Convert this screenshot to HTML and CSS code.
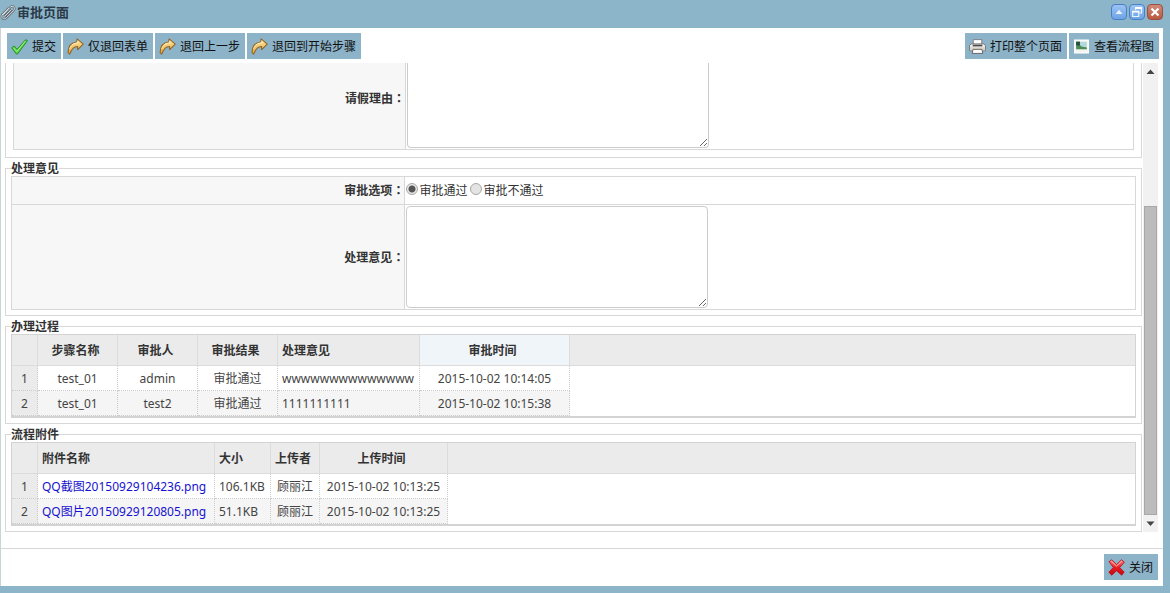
FILE: index.html
```html
<!DOCTYPE html>
<html lang="zh-CN">
<head>
<meta charset="utf-8">
<title>审批页面</title>
<link rel="stylesheet" href="styles.css">
</head>
<body>
<svg width="0" height="0" class="defs" aria-hidden="true">
  <defs>
    <linearGradient id="gold" x1="0" y1="0" x2="0" y2="1"><stop offset="0" stop-color="#ffeaa8"/><stop offset="1" stop-color="#e9a02c"/></linearGradient>
    <linearGradient id="red" x1="0" y1="0" x2="0" y2="1"><stop offset="0" stop-color="#ff8a8a"/><stop offset="0.5" stop-color="#e81c22"/><stop offset="1" stop-color="#c8060e"/></linearGradient>
    <symbol id="arrow" viewBox="0 0 16 16"><path d="M9.500.8 15.300 5.700 10 10.900V8C6.500 7.800 4.400 10.200 2.600 15.200L1 13.800C1.200 8 4 4 9.200 3.700Z" fill="url(#gold)" stroke="#8f6526" stroke-width="1" stroke-linejoin="round"/><path d="M10.300 2.700v2C6.500 4.800 3.700 6.600 2.500 10.500" fill="none" stroke="#fff3cf" stroke-width=".8"/></symbol>
  </defs>
</svg>
<div class="window">
  <header class="titlebar">
    <svg class="clip" viewBox="0 0 16 16" aria-hidden="true"><path d="M3.200 10.800 9.800 3.600c1.300-1.400 3-1.700 4-.7s.8 2.600-.4 3.900L6.600 13.700c-1.200 1.200-2.900 1.500-4 .5s-1-2.700.1-4L8.500 4.300M5 12.200l6.400-6.800" fill="none" stroke="#58636b" stroke-width="2.100"/><path d="M3.200 10.800 9.800 3.600c1.300-1.400 3-1.700 4-.7s.8 2.600-.4 3.900L6.600 13.700c-1.200 1.200-2.900 1.500-4 .5s-1-2.700.1-4L8.500 4.300M5 12.200l6.400-6.800" fill="none" stroke="#e4e7e9" stroke-width="1"/></svg>
    <h1 class="title">审批页面</h1>
    <div class="tools">
      <button class="tool" aria-label="收起"><svg viewBox="0 0 14 14"><path d="M7 4.800 10.500 9h-7z" fill="#e8f3ff"/></svg></button>
      <button class="tool" aria-label="还原"><svg viewBox="0 0 14 14"><path d="M5.500 5V3h6v5h-2M2.700 6.500h6v5h-6z" fill="none" stroke="#e8f3ff" stroke-width="1.200"/><path d="M5 3h7M2.200 6.600h7" stroke="#fff" stroke-width="1.800"/></svg></button>
      <button class="tool tool-close" aria-label="关闭窗口"><svg viewBox="0 0 14 14"><path d="m3.500 3.500 7 7m0-7-7 7" stroke="#fff" stroke-width="2.200"/></svg></button>
    </div>
  </header>
  <main class="panel">
    <div class="toolbar">
      <button class="btn"><svg viewBox="0 0 16 16"><path d="M.7 9.200 3 7.500l2.700 3.200L13.800 1.600l1.700.8L6.200 15H4.900Z" fill="#55cf43" stroke="#238f25" stroke-width=".9" stroke-linejoin="round"/><path d="m2.300 9.200 3.200 3.500L13.600 3" fill="none" stroke="#aff497" stroke-width=".9"/></svg><span>提交</span></button>
      <button class="btn"><svg><use href="#arrow"/></svg><span>仅退回表单</span></button>
      <button class="btn"><svg><use href="#arrow"/></svg><span>退回上一步</span></button>
      <button class="btn"><svg><use href="#arrow"/></svg><span>退回到开始步骤</span></button>
      <span class="spacer"></span>
      <button class="btn"><svg viewBox="0 0 16 16"><path d="M4 1.500h8V6H4z" fill="#fff" stroke="#777" stroke-width=".8"/><path d="M2 5.500h12l1.500 1.700V12H.5V7.200z" fill="#ececec" stroke="#6b6b6b" stroke-width=".8"/><path d="M3.500 6.300h9v1.600h-9z" fill="#4a4a4a"/><path d="M.9 8.800h14.200V11.600H.9z" fill="#d9d3c8"/><path d="M3.800 10.700h8.400l.8 3.800H3z" fill="#fff" stroke="#555" stroke-width=".8"/></svg><span>打印整个页面</span></button>
      <button class="btn"><svg viewBox="0 0 16 16"><path d="M1.500 2h13v12h-13z" fill="#f5f5ee" stroke="#fff"/><path d="M3 3.500h10v7H3z" fill="#b4d9dc"/><path d="M3 3.500h3.500v3L8 8l5 1v1.500H3z" fill="#4d8c55"/><path d="M3 3.500h3.500v3.500H3z" fill="#234f3d"/></svg><span>查看流程图</span></button>
    </div>
    <div class="viewport">
      <div class="content">
        <section class="sheet sheet-cut">
          <table class="form form-cut">
            <colgroup><col class="c-label"><col></colgroup>
            <tr><th scope="row"><label for="reason">请假理由<span class="colon" lang="zh-TW">：</span></label></th><td><textarea id="reason" class="area area-cut"></textarea></td></tr>
          </table>
        </section>
        <fieldset class="sheet">
          <legend>处理意见</legend>
          <table class="form">
            <colgroup><col class="c-label"><col></colgroup>
            <tr class="r-option"><th scope="row">审批选项<span class="colon" lang="zh-TW">：</span></th><td><div class="options"><input type="radio" name="result" id="pass" checked><label for="pass">审批通过</label><input type="radio" name="result" id="fail"><label for="fail">审批不通过</label></div></td></tr>
            <tr class="r-text"><th scope="row"><label for="opinion">处理意见<span class="colon" lang="zh-TW">：</span></label></th><td><textarea id="opinion" class="area"></textarea></td></tr>
          </table>
        </fieldset>
        <fieldset class="sheet">
          <legend>办理过程</legend>
          <table class="grid">
            <colgroup><col class="w-num"><col class="w-80"><col class="w-80"><col class="w-80"><col class="w-142"><col class="w-150"><col></colgroup>
            <thead><tr><th></th><th>步骤名称</th><th>审批人</th><th>审批结果</th><th class="left">处理意见</th><th class="hover">审批时间</th><th class="rest"></th></tr></thead>
            <tbody>
              <tr><td class="num">1</td><td>test_01</td><td>admin</td><td>审批通过</td><td class="left">wwwwwwwwwwwwww</td><td>2015-10-02 10:14:05</td><td class="rest"></td></tr>
              <tr><td class="num">2</td><td>test_01</td><td>test2</td><td>审批通过</td><td class="left">1111111111</td><td>2015-10-02 10:15:38</td><td class="rest"></td></tr>
            </tbody>
          </table>
        </fieldset>
        <fieldset class="sheet">
          <legend>流程附件</legend>
          <table class="grid">
            <colgroup><col class="w-num"><col class="w-177"><col class="w-56"><col class="w-49"><col class="w-128"><col></colgroup>
            <thead><tr><th></th><th class="left">附件名称</th><th class="left">大小</th><th class="left">上传者</th><th>上传时间</th><th class="rest"></th></tr></thead>
            <tbody>
              <tr><td class="num">1</td><td class="left"><a href="#">QQ截图20150929104236.png</a></td><td class="left">106.1KB</td><td>顾丽江</td><td>2015-10-02 10:13:25</td><td class="rest"></td></tr>
              <tr><td class="num">2</td><td class="left"><a href="#">QQ图片20150929120805.png</a></td><td class="left">51.1KB</td><td>顾丽江</td><td>2015-10-02 10:13:25</td><td class="rest"></td></tr>
            </tbody>
          </table>
        </fieldset>
      </div>
      <div class="scrollbar" aria-hidden="true">
        <svg viewBox="0 0 15 17"><path d="M7.500 6.500 11.500 11h-8z" fill="#444"/></svg>
        <div class="track"><div class="thumb"></div></div>
        <svg viewBox="0 0 15 17"><path d="M7.500 11 11.500 6.500h-8z" fill="#444"/></svg>
      </div>
    </div>
    <footer class="footer">
      <button class="btn"><svg viewBox="0 0 16 16"><path d="M1 2.500 3.500.8 8 5.200 12.800.7 15.400 3 11 8l4.200 4.300-2.300 2.900L8 11l-4.500 4.200L.8 12.500 5 8z" fill="url(#red)" stroke="#b31218" stroke-width=".8" stroke-linejoin="round"/><path d="M3.300 2.200 8 6.600 12.800 2.200" fill="none" stroke="#ffc4c4" stroke-width=".9"/></svg><span>关闭</span></button>
    </footer>
  </main>
</div>
</body>
</html>
```
FILE: styles.css
```css
* { box-sizing: border-box; }
body {
  margin: 0;
  background: #8db5ca;
  color: #333;
  font: 12px/16px "Noto Sans", "Noto Sans CJK SC", sans-serif;
}
button, textarea, input { font: inherit; margin: 0; }
svg { display: block; flex: none; }
.defs { position: absolute; }
.window { display: flex; flex-direction: column; min-height: 100vh; padding: 0 7px 7px 0; }

.titlebar { display: flex; align-items: center; height: 28px; padding-bottom: 4px; }
.clip { width: 16px; height: 16px; }
.title { margin: 0 0 0 1px; font-size: 13px; line-height: 16px; color: #2b3a48; }
.tools { display: flex; gap: 2px; margin-left: auto; }
.tool {
  width: 16px; height: 16px; padding: 0;
  border: 1px solid #4a7fc4; border-radius: 4px;
  background: linear-gradient(#9bc3f5, #6da4e6);
}
.tool svg { width: 14px; height: 14px; }
.tool-close { border-color: #9b4f42; background: linear-gradient(#cf8b7a, #b9593f); }

.panel {
  flex: 1; display: flex; flex-direction: column;
  background: #fff; border-left: 1px solid #c9d3d8;
}
.toolbar { display: flex; gap: 2px; padding: 5px 4px 4px 6px; }
.spacer { flex: 1; }
.btn {
  display: flex; align-items: center; gap: 4px;
  height: 26px; padding: 0 5px 0 4px;
  border: 0; background: #8db3c9; color: #111; white-space: nowrap;
}
.btn svg { width: 17px; height: 17px; }
.btn span { padding-top: 2px; }

.viewport { display: flex; gap: 1px; padding: 0 5px 0 4px; }
.content { flex: 1; min-width: 0; }
.sheet { min-width: 0; margin: 0 0 2px; padding: 0 5px 5px; border: 1px solid #d8d8d8; }
.sheet:last-child { margin-bottom: 0; }
.sheet-cut { padding: 0 7px 7px; border-top: 0; }
legend { height: 16px; padding: 0; font-weight: bold; line-height: 18px; }

table { width: 100%; table-layout: fixed; }
.form { border-collapse: collapse; }
.form th, .form td { border: 1px solid #d8d8d8; padding: 1px; }
.form th { padding-right: 0; background: #f7f7f7; text-align: right; }
.form-cut th, .form-cut td { border-top: 0; padding-top: 0; }
.form-cut th { padding-bottom: 16px; }
.c-label { width: 35%; }
.colon { font-family: "Noto Sans CJK TC", sans-serif; }
.r-option { height: 28px; }
.r-text th { height: 105px; }
.area {
  display: block; width: 302px; max-width: 100%; height: 102px;
  border: 1px solid #ccc; border-radius: 4px; background: #fff; resize: both;
}
.area-cut { height: 85px; border-top: 0; border-radius: 0 0 4px 4px; }
.options { display: flex; align-items: center; }
.options label { margin-right: 3px; }
.options input {
  width: 12px; height: 12px; margin: 0 1px 4px 0;
  appearance: none; border: 1px solid #a8a8a8; border-radius: 50%; background: #e4e4e4;
}
.options input:checked { background: radial-gradient(circle, #555 0 3px, #e8e8e8 4px); }

.grid { border: 1px solid #d3d3d3; border-bottom-width: 2px; border-spacing: 0; }
.grid th, .grid td { padding: 2px 4px 0; text-align: center; white-space: nowrap; }
.grid th { height: 31px; padding-right: 8px; background: #ebebeb; border-right: 1px solid #dcdcdc; border-bottom: 1px solid #dcdcdc; }
.grid td { height: 25px; border-right: 1px dotted #ccc; border-bottom: 1px dotted #ccc; color: #444; }
.grid .left { padding-right: 0; text-align: left; }
.grid .num { padding: 2px 0 0; background: #ebebeb; }
.grid .hover { background: #f0f5f9; }
.grid .rest { border-right: 0; }
.grid tbody tr:nth-child(2) { background: #f5f5f5; }
.grid td.rest { background: #fff; border: 0; }
.grid a { color: #1512d0; text-decoration: none; }
.w-num { width: 26px; }
.w-49 { width: 49px; }
.w-56 { width: 56px; }
.w-80 { width: 80px; }
.w-128 { width: 128px; }
.w-142 { width: 142px; }
.w-150 { width: 150px; }
.w-177 { width: 177px; }

.scrollbar { display: flex; flex-direction: column; width: 15px; background: #f1f1f1; }
.scrollbar svg { width: 15px; height: 17px; }
.track { flex: 1; display: flex; flex-direction: column; justify-content: flex-end; padding: 0 1px; }
.thumb { height: 71%; background: #bcbcbc; border: 1px solid #a8a8a8; }

.footer { display: flex; justify-content: flex-end; margin-top: auto; padding: 5px 5px 6px; border-top: 1px solid #d8d8d8; }
```
